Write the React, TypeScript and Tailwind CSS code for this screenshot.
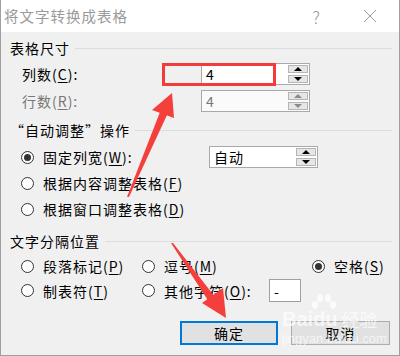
import React from "react";

const font = "font-['Noto_Sans_CJK_SC','Microsoft_YaHei',sans-serif]";

function Key({ k }: { k: string }) {
  return (
    <span>
      (<span className="underline underline-offset-2">{k}</span>)
    </span>
  );
}

function Radio({ checked }: { checked?: boolean }) {
  return (
    <span className="w-[13px] h-[13px] shrink-0 rounded-full border border-[#333] bg-white flex items-center justify-center">
      {checked && <span className="w-[7px] h-[7px] rounded-full bg-[#333]" />}
    </span>
  );
}

function Tri({ up, color }: { up?: boolean; color: string }) {
  return (
    <svg width="8" height="4" viewBox="0 0 8 4">
      <polygon points={up ? "0,4 8,4 4,0" : "0,0 8,0 4,4"} fill={color} />
    </svg>
  );
}

function Spin({ value, disabled }: { value: string; disabled?: boolean }) {
  const arrow = disabled ? "#8a8a8a" : "#000";
  return (
    <div
      className={`w-[109px] h-[22px] border border-[#a9a9a9] flex items-center justify-between pl-[4px] pr-[1px] ${
        disabled ? "bg-[#fafafa] text-[#777]" : "bg-white text-black"
      }`}
    >
      <span>{value}</span>
      <div className="flex flex-col gap-[2px]">
        <div className="w-[20px] h-[8px] border border-[#b5b5b5] bg-[#e6e6e6] flex items-center justify-center">
          <Tri up color={arrow} />
        </div>
        <div className="w-[20px] h-[8px] border border-[#b5b5b5] bg-[#e6e6e6] flex items-center justify-center">
          <Tri color={arrow} />
        </div>
      </div>
    </div>
  );
}

function Header({ text }: { text: string }) {
  return (
    <div className="h-[16px] flex items-center pl-[9px] pr-[7px]">
      <span>{text}</span>
      <div className="flex-1 h-px bg-[#dcdcdc] ml-[5px]" />
    </div>
  );
}

export default function App() {
  return (
    <div className={`relative w-[400px] h-[356px] text-[14px] tracking-[1px] leading-none text-black overflow-hidden ${font}`}>
      {/* title bar */}
      <div className="h-[32px] bg-white flex items-center border-l border-r border-[#a0a0a0] text-[#9a9a9a]">
        <span className="pl-[3px] flex-1 text-[14.5px]">将文字转换成表格</span>
        <span className="w-[20px] text-[17px] text-center mr-[37px] font-light tracking-normal">?</span>
        <svg width="14" height="14" viewBox="0 0 14 14" className="mr-[22px]">
          <path d="M1 1 L13 13 M13 1 L1 13" stroke="#9a9a9a" strokeWidth="1" />
        </svg>
      </div>

      {/* body */}
      <div className="h-[324px] bg-[#f0f0f0] border-l border-r border-b border-[#a0a0a0] flex flex-col">
        <div className="mt-[8px]">
          <Header text="表格尺寸" />
        </div>

        <div className="mt-[7px] h-[22px] flex items-center pl-[21px]">
          <span className="w-[179px]">
            列数<Key k="C" />:
          </span>
          <Spin value="4" />
        </div>

        <div className="mt-[5px] h-[22px] flex items-center pl-[21px] text-[#777]">
          <span className="w-[179px]">
            行数<Key k="R" />:
          </span>
          <Spin value="4" disabled />
        </div>

        <div className="mt-[10px]">
          <Header text="“自动调整”操作" />
        </div>

        <div className="mt-[8px] h-[22px] flex items-center pl-[20px]">
          <Radio checked />
          <span className="w-[166px] ml-[9px]">
            固定列宽<Key k="W" />:
          </span>
          <Spin value="自动" />
        </div>

        <div className="mt-[4px] h-[22px] flex items-center pl-[20px]">
          <Radio />
          <span className="ml-[9px]">
            根据内容调整表格<Key k="F" />
          </span>
        </div>

        <div className="mt-[4px] h-[22px] flex items-center pl-[20px]">
          <Radio />
          <span className="ml-[9px]">
            根据窗口调整表格<Key k="D" />
          </span>
        </div>

        <div className="mt-[13px]">
          <Header text="文字分隔位置" />
        </div>

        <div className="mt-[6px] h-[22px] flex items-center pl-[20px]">
          <div className="w-[121px] flex items-center">
            <Radio />
            <span className="ml-[9px]">
              段落标记<Key k="P" />
            </span>
          </div>
          <div className="w-[170px] flex items-center">
            <Radio />
            <span className="ml-[9px]">
              逗号<Key k="M" />
            </span>
          </div>
          <div className="flex items-center">
            <Radio checked />
            <span className="ml-[9px]">
              空格<Key k="S" />
            </span>
          </div>
        </div>

        <div className="mt-[2px] h-[23px] flex items-center pl-[20px]">
          <div className="w-[121px] flex items-center">
            <Radio />
            <span className="ml-[9px]">
              制表符<Key k="T" />
            </span>
          </div>
          <div className="flex items-center">
            <Radio />
            <span className="ml-[9px] w-[105px]">
              其他字符<Key k="O" />:
            </span>
            <div className="w-[32px] h-[23px] border border-[#a0a0a0] bg-white flex items-center pl-[4px]">
              -
            </div>
          </div>
        </div>

        <div className="mt-[19px] h-[24px] flex items-center pl-[179px] gap-[13px]">
          <div className="w-[98px] h-[24px] border-2 border-[#0078d7] bg-[#e1e1e1] flex items-center justify-center">
            确定
          </div>
          <div className="w-[99px] h-[24px] border border-[#adadad] bg-[#e1e1e1] flex items-center justify-center">
            取消
          </div>
        </div>
      </div>

      {/* watermark */}
      <div className="absolute left-[282px] top-[309px] flex flex-col items-start text-white/70 pointer-events-none tracking-normal font-['Liberation_Sans',sans-serif]">
        <div className="flex items-center text-[20px] font-bold leading-none">
          <span>Bai</span>
          <span className="relative">
            du
            <svg width="30" height="26" viewBox="0 0 30 26" className="absolute left-[-4px] top-[-16px]">
              <ellipse cx="6" cy="12" rx="3" ry="4" fill="rgba(255,255,255,0.75)" />
              <ellipse cx="11" cy="5" rx="3" ry="4" fill="rgba(255,255,255,0.75)" />
              <ellipse cx="19" cy="5" rx="3" ry="4" fill="rgba(255,255,255,0.75)" />
              <ellipse cx="24" cy="12" rx="3" ry="4" fill="rgba(255,255,255,0.75)" />
            </svg>
          </span>
          <span className={`ml-[4px] text-[18px] font-normal ${font}`}>经验</span>
        </div>
        <span className="text-[13px] mt-[3px]">jingyan.baidu.com</span>
      </div>

      {/* annotations */}
      <div className="absolute left-[162px] top-[63px] w-[114px] h-[23px] border-[3px] border-[#f43b3b]" />
      <svg className="absolute left-0 top-0 pointer-events-none" width="400" height="356" viewBox="0 0 400 356">
        <polygon points="127,197 129,197 167,115 160,112" fill="#f43f3c" />
        <polygon points="172,93 152,110 174,118" fill="#f43f3c" />
        <polygon points="171,243 173,243 215,297 209,302" fill="#f43f3c" />
        <polygon points="226,318 202,303 223,288" fill="#f43f3c" />
      </svg>
    </div>
  );
}
